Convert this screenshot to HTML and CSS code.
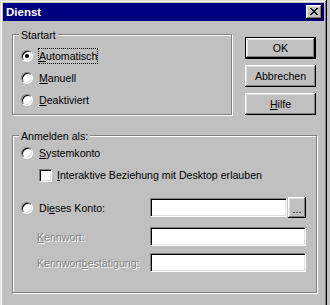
FILE: index.html
```html
<!DOCTYPE html>
<html lang="de">
<head>
<meta charset="utf-8">
<title>Dienst</title>
<link rel="stylesheet" href="styles.css">
</head>
<body>
<div class="window">
  <div class="titlebar">
    <span class="title">Dienst</span>
    <button class="close" aria-label="Schließen"><svg width="8" height="7" viewBox="0 0 8 7" shape-rendering="crispEdges"><path d="M0 0h2v1H0zM6 0h2v1H6zM1 1h2v1H1zM5 1h2v1H5zM2 2h4v1H2zM3 3h2v1H3zM2 4h4v1H2zM1 5h2v1H1zM5 5h2v1H5zM0 6h2v1H0zM6 6h2v1H6z" fill="#000"/></svg></button>
  </div>
  <div class="content">
    <div class="top">
      <div class="group startart">
        <div class="legend">Startart</div>
        <div class="row"><span class="radio checked"></span><span class="lbl focus"><u>A</u>utomatisch</span></div>
        <div class="row"><span class="radio"></span><span class="lbl"><u>M</u>anuell</span></div>
        <div class="row"><span class="radio"></span><span class="lbl"><u>D</u>eaktiviert</span></div>
      </div>
      <div class="buttons">
        <button class="btn default">OK</button>
        <button class="btn">Abbrechen</button>
        <button class="btn"><u>H</u>ilfe</button>
      </div>
    </div>
    <div class="group anmelden">
      <div class="legend">Anmelden als:</div>
      <div class="row row-a"><span class="radio"></span><span class="lbl"><u>S</u>ystemkonto</span></div>
      <div class="row row-b"><span class="check"></span><span class="lbl"><u>I</u>nteraktive Beziehung mit Desktop erlauben</span></div>
      <div class="row row-c"><span class="radio"></span><span class="lbl">Di<u>e</u>ses Konto:</span>
        <div class="field"><span class="input konto"></span><button class="btn browse">...</button></div>
      </div>
      <div class="row row-d"><span class="lbl disabled"><u>K</u>ennwort:</span>
        <div class="field"><span class="input wide"></span></div>
      </div>
      <div class="row row-e"><span class="lbl disabled">Kennwort<u>b</u>estätigung:</span>
        <div class="field"><span class="input wide"></span></div>
      </div>
    </div>
  </div>
</div>
</body>
</html>
```

FILE: styles.css
```css
* { box-sizing: border-box; }
html, body { margin: 0; padding: 0; }
body {
  width: 330px;
  height: 305px;
  overflow: hidden;
  background: #c0c0c0;
  font-family: "Liberation Sans", Arial, sans-serif;
  font-size: 10.6px;
  color: #000;
}
.window {
  width: 327px;
  height: 308px;
  padding: 3px;
  background: #c0c0c0;
  box-shadow: inset -1px -1px #000, inset 1px 1px #dfdfdf, inset -2px -2px #808080, inset 2px 2px #fff;
  display: flex;
  flex-direction: column;
}
.titlebar {
  height: 18px;
  flex: none;
  background: #000080;
  display: flex;
  align-items: center;
  padding: 0 2px 0 3px;
}
.title {
  flex: 1;
  color: #fff;
  font-weight: bold;
  font-size: 11.5px;
}
.close {
  width: 16px;
  height: 14px;
  margin: 0;
  padding: 0 1px 1px 0;
  border: 0;
  background: #c0c0c0;
  box-shadow: inset -1px -1px #000, inset 1px 1px #fff, inset -2px -2px #808080, inset 2px 2px #dfdfdf;
  display: flex;
  align-items: center;
  justify-content: center;
}
.close svg { display: block; }
.content {
  padding-left: 9px;
}
.top {
  display: flex;
  margin-top: 13px;
}
.group {
  border: 1px solid #808080;
  box-shadow: inset 1px 1px #fff, 1px 1px #fff;
  display: flex;
  flex-direction: column;
}
.legend {
  align-self: flex-start;
  margin: -6px 0 0 6px;
  padding: 0 2px;
  line-height: 13px;
  background: #c0c0c0;
}
.startart {
  width: 220px;
  height: 81px;
}
.startart .legend { margin-bottom: 3px; }
.row {
  display: flex;
  align-items: center;
  height: 22px;
  padding-left: 8px;
}
.radio {
  flex: none;
  position: relative;
  width: 12px;
  height: 12px;
  margin-right: 5px;
  border-radius: 50%;
  background: #fff;
  border: 1px solid;
  border-color: #808080 #fff #fff #808080;
  box-shadow: inset 1px 1px #000, inset -1px -1px #dfdfdf;
}
.radio.checked::after {
  content: "";
  position: absolute;
  left: 3px;
  top: 3px;
  width: 4px;
  height: 4px;
  border-radius: 50%;
  background: #000;
}
.check {
  flex: none;
  width: 13px;
  height: 13px;
  margin-right: 4px;
  background: #fff;
  border: 1px solid;
  border-color: #808080 #fff #fff #808080;
  box-shadow: inset 1px 1px #000, inset -1px -1px #dfdfdf;
}
.lbl {
  border: 1px solid transparent;
  line-height: 14px;
  white-space: nowrap;
}
.lbl.focus { border: 1px dotted #000; }
.lbl.disabled {
  color: #808080;
  text-shadow: 1px 1px 0 #fff;
}
.buttons {
  display: flex;
  flex-direction: column;
  gap: 6px;
  margin: 3px 0 0 13px;
}
.btn {
  width: 71px;
  height: 22px;
  margin: 0;
  padding: 0;
  border: 0;
  font: inherit;
  color: #000;
  background: #c0c0c0;
  box-shadow: inset -1px -1px #000, inset 1px 1px #fff, inset -2px -2px #808080, inset 2px 2px #dfdfdf;
}
.btn.default {
  box-shadow: inset 0 0 0 1px #000, inset -2px -2px #000, inset 2px 2px #fff, inset -3px -3px #808080, inset 3px 3px #dfdfdf;
}
.anmelden {
  width: 305px;
  height: 158px;
  margin-top: 20px;
}
.row-a { height: 20px; }
.row-b { height: 20px; margin-top: 2px; padding-left: 26px; }
.row-c { height: 21px; margin-top: 12px; padding-right: 10px; }
.row-d { height: 19px; margin-top: 9px; padding-left: 23px; padding-right: 10px; }
.row-e { height: 19px; margin-top: 7px; padding-left: 23px; padding-right: 10px; }
.field {
  margin-left: auto;
  display: flex;
  align-items: center;
  width: 156px;
}
.input {
  display: block;
  height: 19px;
  background: #fff;
  border: 1px solid;
  border-color: #808080 #fff #fff #808080;
  box-shadow: inset 1px 1px #000, inset -1px -1px #dfdfdf;
}
.input.konto { width: 137px; }
.input.wide { width: 156px; }
.btn.browse {
  width: 18px;
  height: 21px;
  margin-left: 1px;
  line-height: 21px;
  padding-top: 2px;
}
```
